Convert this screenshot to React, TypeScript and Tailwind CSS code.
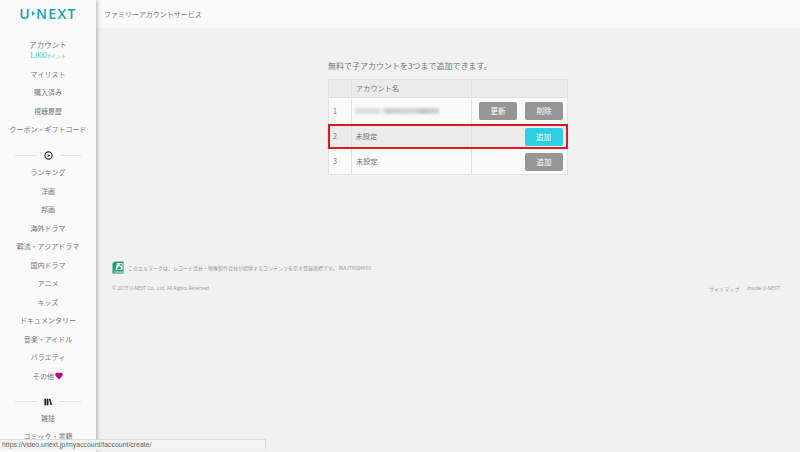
const topLinks = ["マイリスト", "購入済み", "視聴履歴", "クーポン・ギフトコード"];
const videoLinks = [
  "ランキング",
  "洋画",
  "邦画",
  "海外ドラマ",
  "韓流・アジアドラマ",
  "国内ドラマ",
  "アニメ",
  "キッズ",
  "ドキュメンタリー",
  "音楽・アイドル",
  "バラエティ",
];

const NavItem = ({ children }: { children: React.ReactNode }) => (
  <li className="h-[18.55px] flex items-center justify-center text-[7px] leading-none text-[#777] whitespace-nowrap">
    {children}
  </li>
);

const Divider = ({ children }: { children: React.ReactNode }) => (
  <div className="flex items-center justify-center gap-[7px] px-[15px]">
    <span className="h-px flex-1 bg-[#e2e2e2]" />
    {children}
    <span className="h-px flex-1 bg-[#e2e2e2]" />
  </div>
);

const Button = ({ label, active }: { label: string; active?: boolean }) => (
  <button
    className={`w-[38px] h-[18px] rounded-[2px] text-[7.5px] text-white ${active ? "bg-[#2ecfe2]" : "bg-[#969696]"}`}
  >
    {label}
  </button>
);

const App = () => {
  return (
    <div
      className="relative flex h-[452px] w-[800px] overflow-hidden bg-[#f1f1f1]"
      style={{ fontFamily: '"Noto Sans CJK JP", "Noto Sans", sans-serif' }}
    >
      {/* SIDEBAR */}
      <aside className="z-10 flex w-[96px] shrink-0 flex-col bg-[#fafafa] shadow-[1px_0_4px_rgba(0,0,0,0.3)]">
        <div
          className="mt-[3px] flex h-[20px] items-center justify-center text-[14px] font-semibold tracking-[1.3px] text-[#12a5bd]"
          style={{ fontFamily: '"Open Sans", sans-serif' }}
        >
          U
          <svg className="mx-[1px]" width="3" height="5" viewBox="0 0 3 5">
            <path d="M0 0 L3 2.5 L0 5 Z" fill="#12a5bd" />
          </svg>
          NEXT
        </div>

        <div className="mt-[16px] flex flex-col items-center">
          <span className="text-[7.5px] leading-[11px] text-[#777]">アカウント</span>
          <span className="text-[7.5px] leading-[11px] text-[#2cc4d8]" style={{ fontFamily: '"Liberation Serif", serif' }}>
            1,000<span className="text-[5px]">ポイント</span>
          </span>
        </div>

        <ul className="mt-[3px]">
          {topLinks.map((link) => (
            <NavItem key={link}>{link}</NavItem>
          ))}
        </ul>

        <div className="mt-[12px]">
          <Divider>
            <svg width="9" height="9" viewBox="0 0 10 10">
              <circle cx="5" cy="5" r="4" fill="none" stroke="#333" strokeWidth="1.3" />
              <path d="M4 3.2 L7 5 L4 6.8 Z" fill="#333" />
            </svg>
          </Divider>
        </div>

        <ul className="mt-[3px]">
          {videoLinks.map((link) => (
            <NavItem key={link}>{link}</NavItem>
          ))}
          <NavItem>
            その他
            <svg className="ml-[1px]" width="8" height="8" viewBox="0 0 10 10">
              <path d="M5 9.5 L0.8 4.8 A2.4 2.4 0 0 1 5 2 A2.4 2.4 0 0 1 9.2 4.8 Z" fill="#c4007a" />
            </svg>
          </NavItem>
        </ul>

        <div className="mt-[12px]">
          <Divider>
            <svg width="8" height="8" viewBox="0 0 10 10">
              <path d="M0.5 1h2.2v8H0.5z M3.4 1h2.2v8H3.4z M6.2 1.4l1.9-.5 1.9 7.6-1.9.5z" fill="#222" />
            </svg>
          </Divider>
        </div>

        <ul className="mt-[3px]">
          <NavItem>雑誌</NavItem>
          <NavItem>コミック・書籍</NavItem>
        </ul>
      </aside>

      {/* MAIN */}
      <main className="flex min-w-0 flex-1 flex-col">
        <header className="flex h-[28px] items-center bg-[#fafafa] pl-[8px] text-[7px] text-[#777]">
          ファミリーアカウントサービス
        </header>

        <div className="ml-[232px] mt-[32px] w-[240px]">
          <p className="text-[8px] leading-[11px] text-[#777]">無料で子アカウントを3つまで追加できます。</p>

          <div className="mt-[8px] text-[7.2px] text-[#777]">
            <div className="flex h-[19px] border border-[#e2e2e2] bg-[#ebebeb]">
              <div className="w-[23px] border-r border-[#e2e2e2]" />
              <div className="flex w-[120px] items-center border-r border-[#e2e2e2] pl-[4px]">アカウント名</div>
            </div>

            <div className="flex h-[26px] border-x border-[#e2e2e2] bg-[#fafafa]">
              <div className="flex w-[23px] items-center border-r border-[#e2e2e2] pl-[4px] text-[#777]">1</div>
              <div className="flex w-[120px] items-center border-r border-[#e2e2e2] pl-[3px]">
                <div className="h-[6px] w-[84px] bg-[linear-gradient(90deg,#ddd_0%,#ddd_28%,#f3f3f3_31%,#cfcfcf_38%,#d8d8d8_70%,#c8c8c8_80%,#d6d6d6_100%)] blur-[1px]" />
              </div>
              <div className="flex flex-1 items-center justify-end gap-[8px] pr-[4px]">
                <Button label="更新" />
                <Button label="削除" />
              </div>
            </div>

            <div className="flex h-[25px] items-stretch border-[2.5px] border-[#e8141f] bg-[#ebebeb]">
              <div className="flex w-[21.5px] items-center border-r border-[#dfdfdf] pl-[3px]">2</div>
              <div className="flex w-[120px] items-center border-r border-[#dfdfdf] pl-[4px]">未設定</div>
              <div className="flex flex-1 items-center justify-end pr-[3.5px]">
                <Button label="追加" active />
              </div>
            </div>

            <div className="flex h-[26px] border-x border-b border-[#e2e2e2] bg-[#fafafa]">
              <div className="flex w-[23px] items-center border-r border-[#e2e2e2] pl-[4px]">3</div>
              <div className="flex w-[120px] items-center border-r border-[#e2e2e2] pl-[4px]">未設定</div>
              <div className="flex flex-1 items-center justify-end pr-[4px]">
                <Button label="追加" />
              </div>
            </div>
          </div>
        </div>

        {/* FOOTER */}
        <footer className="mt-[86px] pl-[16px] pr-[20px] text-[#999]">
          <div className="flex items-center gap-[4px]">
            <svg width="12" height="13" viewBox="0 0 12 13">
              <path d="M2.5 0.5 H11.5 V12.5 H0.5 V2.5 Z" fill="#1aa56f" />
              <path d="M5 2 H10.5 V9 H3.5 Z" fill="#fff" />
              <path d="M4.5 8.5 L7 5 L10 8.5 Z" fill="#1aa56f" />
              <rect x="7.7" y="2.6" width="2" height="2" fill="#1aa56f" />
              <path d="M2 11 H11" stroke="#fff" strokeWidth="0.8" />
            </svg>
            <span className="text-[5px] leading-none">
              このエルマークは、レコード会社・映像製作会社が提供するコンテンツを示す登録商標です。 RIAJ70024001
            </span>
          </div>
          <div className="mt-[12px] flex items-start justify-between text-[5px] leading-none">
            <span className="text-[4.8px]" style={{ fontFamily: '"Open Sans", sans-serif' }}>
              © 2015 U-NEXT Co., Ltd. All Rights Reserved.
            </span>
            <span className="flex gap-[8px]">
              <span>サイトマップ</span>
              <span style={{ fontFamily: '"Open Sans", sans-serif' }}>Inside U-NEXT</span>
            </span>
          </div>
        </footer>
      </main>

      {/* STATUS BAR */}
      <div
        className="absolute bottom-[2px] left-0 z-20 h-[11px] w-[266px] border-r border-t border-[#dcdcdc] bg-[#f3f3f3] pl-[2px] text-[6.9px] leading-[10px] text-[#666]"
        style={{ fontFamily: '"Liberation Sans", sans-serif' }}
      >
        https://video.unext.jp/myaccount/faccount/create/
      </div>
    </div>
  );
};

export default App;
